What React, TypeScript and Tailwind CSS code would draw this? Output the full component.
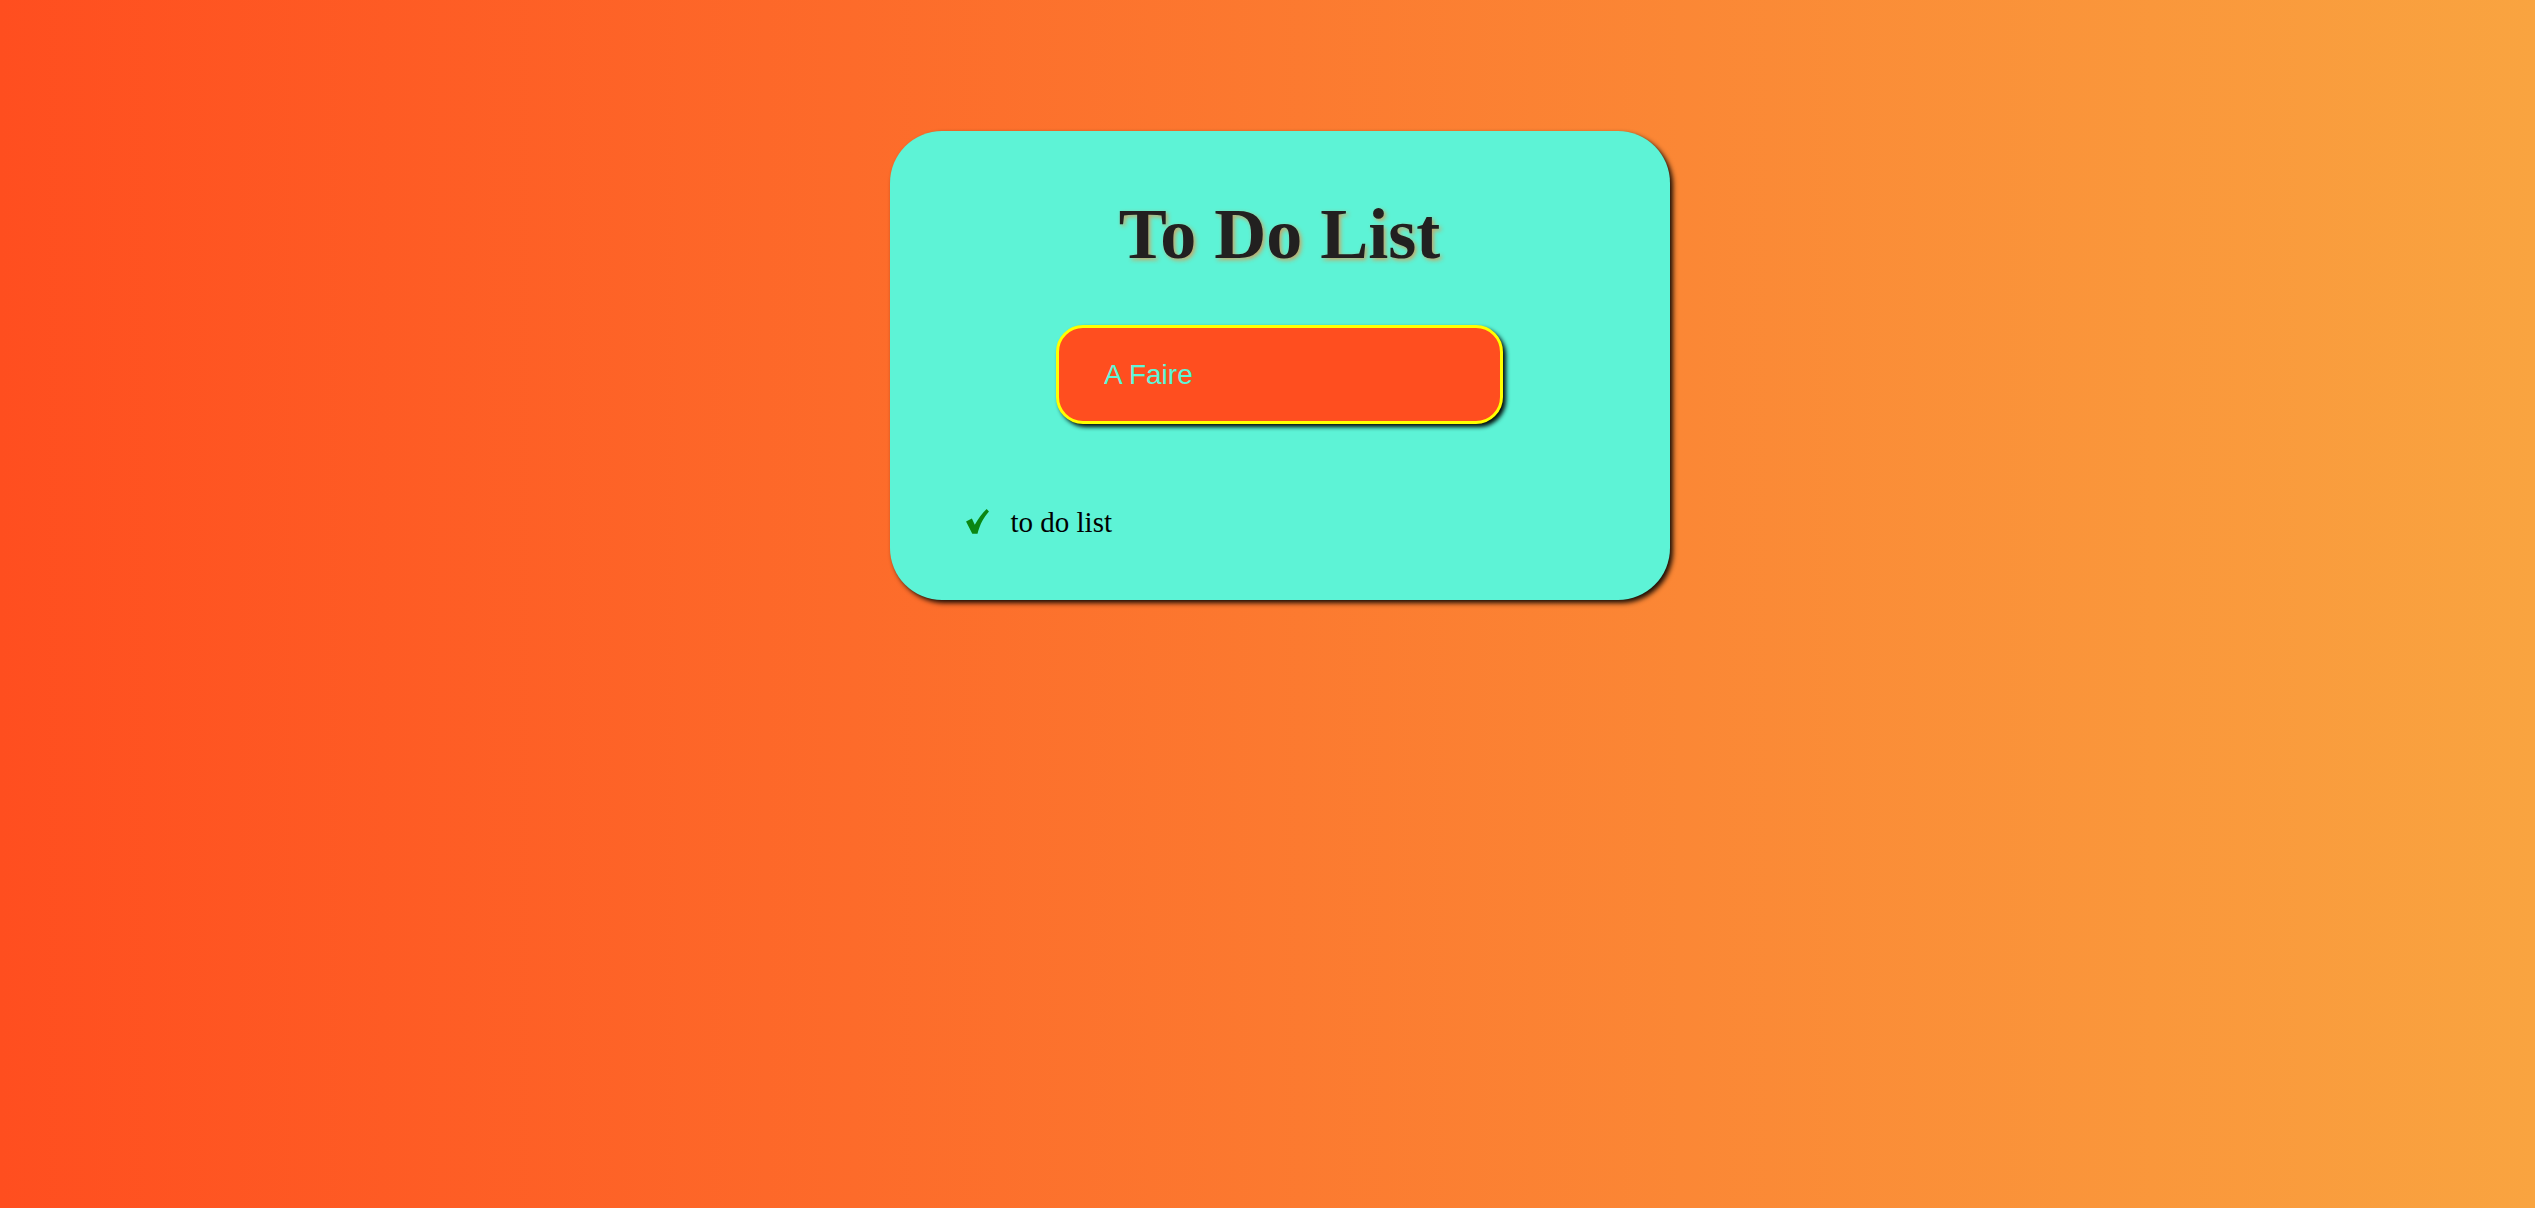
export default function App() {
  return (
    <main className="min-h-[1208px] w-full bg-[linear-gradient(to_right,#ff4e1f,#f9a440)] pt-[131px] pl-[24px] flex justify-center items-start">
      {/* CARD */}
      <section className="w-[780px] bg-[#5df3d6] rounded-[52px] shadow-[3px_3px_5px_rgba(0,0,0,0.9)] pt-[67px] pb-[63px] flex flex-col">
        <h1 className="text-center font-['Liberation_Serif',serif] font-bold text-[72px] leading-none text-[#222020] [text-shadow:2px_2px_4px_rgba(205,160,95,0.95)]">
          To Do List
        </h1>

        <input
          type="text"
          placeholder="A Faire"
          className="mt-[55px] mx-auto w-[447px] h-[99px] rounded-[27px] border-[3px] border-[#ffff00] bg-[#ff4e1f] pl-[45px] font-['Liberation_Sans',Arial,sans-serif] text-[28px] text-[#5ef5d8] placeholder:text-[#5ef5d8] placeholder:opacity-100 outline-none shadow-[3px_3px_4px_rgba(0,0,0,0.95)]"
        />

        <ul className="mt-[84px] pl-[76px]">
          <li className="flex items-end leading-none">
            <svg
              width="23"
              height="25"
              viewBox="0 0 22 24"
              className="mb-[3px] shrink-0"
            >
              <path
                d="M0 12 L5.6 9.2 L8.4 15.2 C11.8 9 15.6 3.6 19.8 0 L22 2.4 C17.2 7.8 13.4 14.2 11 23.8 L6 23.8 Z"
                fill="#0b8613"
              />
            </svg>
            <span className="ml-[22px] font-['Liberation_Serif',serif] text-[29px] leading-none text-black">
              to do list
            </span>
          </li>
        </ul>
      </section>
    </main>
  );
}
